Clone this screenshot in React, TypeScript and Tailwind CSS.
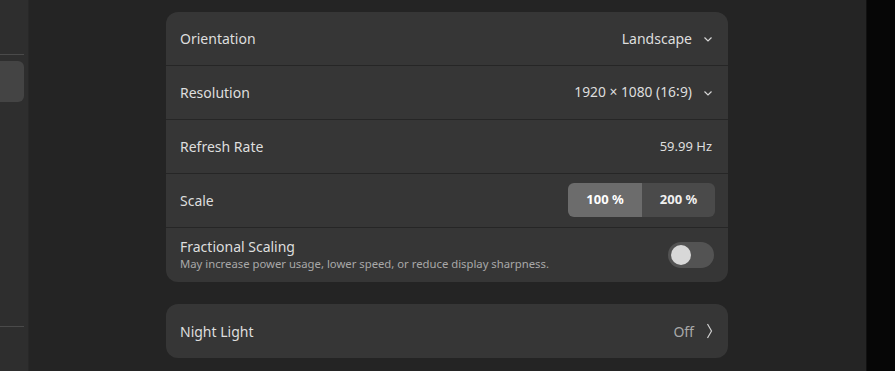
import React from 'react';

function ChevronDown() {
    return (
        <svg width="12" height="12" viewBox="0 0 12 12" className="ml-[10px]">
            <path d="M2.5 4.5 L6 8 L9.5 4.5" fill="none" stroke="#d6d6d6" strokeWidth="1.2" />
        </svg>
    );
}

function ChevronRight() {
    return (
        <svg width="10" height="18" viewBox="0 0 10 18" className="ml-[10px]">
            <path d="M3.5 2 L7.5 9 L3.5 16" fill="none" stroke="#cfcfcf" strokeWidth="1.2" />
        </svg>
    );
}

function Row({ children, last, tight }: { children: React.ReactNode; last?: boolean; tight?: boolean }) {
    return (
        <div
            className={`h-[54px] flex items-center justify-between pl-[14px] ${tight ? 'pr-[13px]' : 'pr-[14px]'} ${
                last ? '' : 'border-b border-[#262626]'
            }`}
        >
            {children}
        </div>
    );
}

export default function App() {
    return (
        <div
            className="w-[895px] h-[371px] flex bg-[#242424] overflow-hidden text-[#dedede]"
            style={{ fontFamily: '"Noto Sans", "Open Sans", sans-serif' }}
        >
            {/* Sidebar sliver */}
            <div className="w-[29px] shrink-0 bg-[#2e2e2e] border-r border-[#282828] flex flex-col">
                <div className="h-[55px] border-b border-[#4a4a4a] mr-[4px]" />
                <div className="h-[41px] mt-[6px] mr-[4px] rounded-r-[6px] bg-[#444444]" />
                <div className="flex-1" />
                <div className="h-[45px] border-t border-[#4a4a4a] mr-[4px]" />
            </div>

            {/* Main content */}
            <main className="flex-1 flex flex-col pl-[137px] pt-[12px]">
                <div className="w-[562px] rounded-[12px] bg-[#363636] overflow-hidden">
                    <Row>
                        <span className="text-[14px]">Orientation</span>
                        <span className="flex items-center text-[14px]">
                            Landscape
                            <ChevronDown />
                        </span>
                    </Row>
                    <Row>
                        <span className="text-[14px]">Resolution</span>
                        <span className="flex items-center text-[13.8px]">
                            1920 × 1080 (16∶9)
                            <ChevronDown />
                        </span>
                    </Row>
                    <Row>
                        <span className="text-[14px]">Refresh Rate</span>
                        <span className="text-[13px] pr-[2px]">59.99 Hz</span>
                    </Row>
                    <Row tight>
                        <span className="text-[14px]">Scale</span>
                        <div className="flex h-[34px] mb-[1px] rounded-[6px] overflow-hidden text-[13px] font-bold">
                            <div className="w-[74px] flex items-center justify-center bg-[#6c6c6c] text-white">100 %</div>
                            <div className="w-[73px] flex items-center justify-center bg-[#4a4a4a] text-[#f0f0f0]">200 %</div>
                        </div>
                    </Row>
                    <Row last>
                        <div className="flex flex-col">
                            <span className="text-[14px] leading-[18px]">Fractional Scaling</span>
                            <span className="text-[11.3px] leading-[16px] text-[#a8a8a8]">
                                May increase power usage, lower speed, or reduce display sharpness.
                            </span>
                        </div>
                        <div className="w-[46px] h-[26px] rounded-full bg-[#535353] flex items-center px-[3px]">
                            <div className="w-[20px] h-[20px] rounded-full bg-[#d8d8d8]" />
                        </div>
                    </Row>
                </div>

                <div className="w-[562px] mt-[22px] rounded-[12px] bg-[#363636]">
                    <Row last>
                        <span className="text-[14px]">Night Light</span>
                        <span className="flex items-center text-[14px] text-[#a8a8a8]">
                            Off
                            <ChevronRight />
                        </span>
                    </Row>
                </div>
            </main>

            {/* Right edge */}
            <div className="w-[29px] shrink-0 bg-[#060606] border-l border-[#111111]" />
        </div>
    );
}
